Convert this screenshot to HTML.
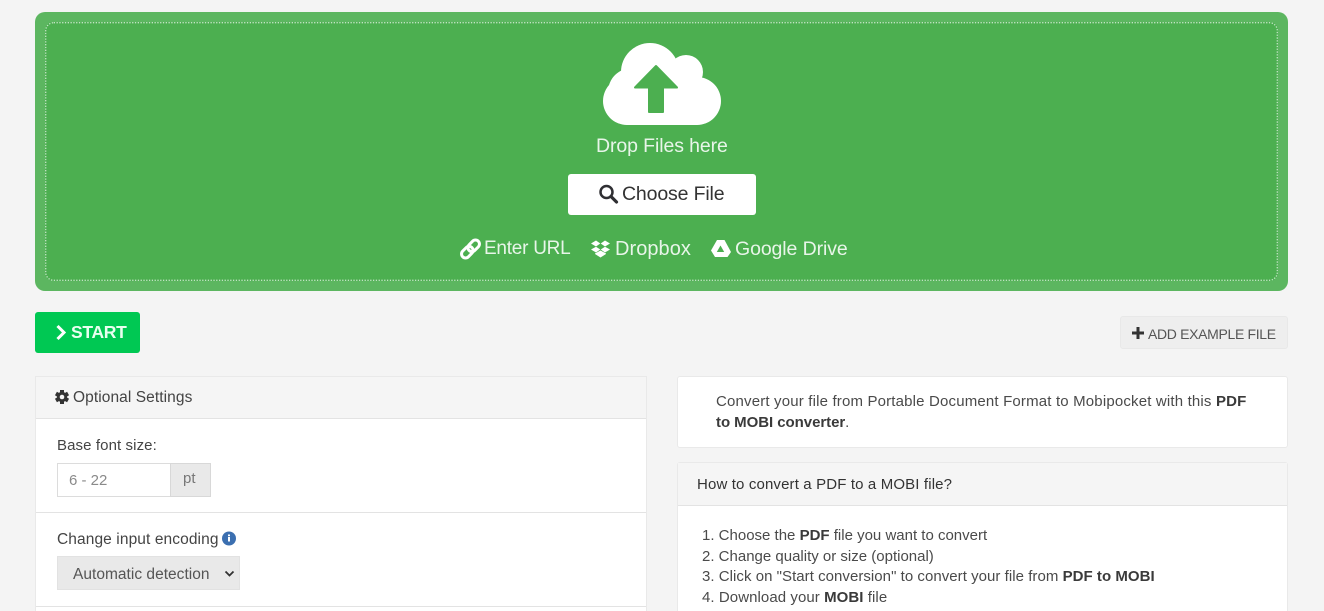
<!DOCTYPE html>
<html lang="en"><head><meta charset="utf-8"><title>PDF to MOBI converter</title>
<style>
html,body{margin:0;padding:0;background:#f4f4f4}
body{width:1324px;height:611px;overflow:hidden;position:relative;font-family:"Liberation Sans",sans-serif;color:#4a4a4a;font-size:15px}
#w{position:absolute;left:0;top:0;width:1324px;height:611px;overflow:hidden;filter:blur(.3px)}
.a{position:absolute;white-space:nowrap;line-height:20px}
.box{position:absolute;box-sizing:border-box;background:#fff;border:1px solid #e9e9e9}
.head{position:absolute;box-sizing:border-box;background:#f5f5f5;border-bottom:1px solid #e3e3e3}
b{font-weight:700;color:#3a3a3a}
svg{position:absolute;overflow:visible}
</style></head><body><div id="w">
<div style="position:absolute;left:35px;top:12px;width:1253px;height:279px;background:#5cb660;border-radius:10px"></div>
<div style="position:absolute;left:45px;top:22px;width:1233px;height:259px;background:#4caf50;border-radius:8px"></div>
<svg style="left:0;top:0" width="1324" height="611"><rect x="45.700" y="22.700" width="1231.600" height="257.600" rx="8" fill="none" stroke="#c3e3c5" stroke-width="1.300" stroke-dasharray="1.300 1.500"/></svg>
<div class="a" style="left:596px;top:136px;color:#e8f5e9;font-size:19.500px;letter-spacing:-.1px">Drop Files here</div>
<div style="position:absolute;left:568px;top:174px;width:188px;height:41px;background:#fff;border-radius:3px"></div>
<div class="a" style="left:622px;top:184px;color:#333;font-size:19.500px;letter-spacing:-.15px">Choose File</div>
<div class="a" style="left:484px;top:239px;color:#e8f5e9;font-size:19px;letter-spacing:-.25px">Enter URL</div>
<div class="a" style="left:615px;top:239px;color:#e8f5e9;font-size:20px;letter-spacing:.05px">Dropbox</div>
<div class="a" style="left:735px;top:239px;color:#e8f5e9;font-size:19.500px;letter-spacing:-.1px">Google Drive</div>
<div style="position:absolute;left:35px;top:312px;width:105px;height:41px;background:#00c853;border-radius:3px"></div>
<div class="a" style="left:71px;top:322px;color:#e9fff0;font-size:17.500px;font-weight:700;letter-spacing:-.3px">START</div>
<div style="position:absolute;left:1120px;top:316px;width:168px;height:33px;box-sizing:border-box;background:#eee;border:1px solid #e8e8e8;border-radius:3px"></div>
<div class="a" style="left:1148px;top:324px;font-size:14px;letter-spacing:-.33px;color:#555">ADD EXAMPLE FILE</div>
<div class="box" style="left:35px;top:376px;width:612px;height:260px"></div>
<div class="head" style="left:36px;top:377px;width:610px;height:42px"></div>
<div class="a" style="left:73px;top:388px;font-size:15.500px;letter-spacing:.08px;color:#444">Optional Settings</div>
<div class="a" style="left:57px;top:436px;font-size:15px;letter-spacing:.1px;color:#444">Base font size:</div>
<div style="position:absolute;left:57px;top:463px;width:114px;height:34px;box-sizing:border-box;background:#fff;border:1px solid #dcdcdc"></div>
<div class="a" style="left:69px;top:471px;font-size:15px;color:#8a8a8a">6 - 22</div>
<div style="position:absolute;left:170px;top:463px;width:41px;height:34px;box-sizing:border-box;background:#e9e9e9;border:1px solid #d8d8d8"></div>
<div class="a" style="left:183px;top:469px;font-size:15px;color:#777">pt</div>
<div style="position:absolute;left:36px;top:512px;width:610px;height:1px;background:#e3e3e3"></div>
<div class="a" style="left:57px;top:530px;font-size:15.500px;letter-spacing:.1px;color:#444">Change input encoding</div>
<div style="position:absolute;left:57px;top:556px;width:183px;height:34px;box-sizing:border-box;background:#e9e9e9;border:1px solid #e2e2e2"></div>
<div class="a" style="left:73px;top:565px;font-size:15.500px;letter-spacing:.02px;color:#555">Automatic detection</div>
<div style="position:absolute;left:36px;top:606px;width:610px;height:1px;background:#e3e3e3"></div>
<div class="box" style="left:677px;top:376px;width:611px;height:72px;border-radius:3px"></div>
<div class="a" style="left:716px;top:392px;font-size:15px;letter-spacing:.17px">Convert your file from Portable Document Format to Mobipocket with this <b>PDF</b></div>
<div class="a" style="left:716px;top:413px;font-size:15px;letter-spacing:-.05px"><b>to MOBI converter</b>.</div>
<div class="box" style="left:677px;top:462px;width:611px;height:170px;border-radius:3px"></div>
<div class="head" style="left:678px;top:463px;width:609px;height:43px"></div>
<div class="a" style="left:697px;top:475px;font-size:15px;letter-spacing:.14px;color:#333">How to convert a PDF to a MOBI file?</div>
<div class="a" style="left:702px;top:526px;font-size:15px">1. Choose the <b>PDF</b> file you want to convert</div>
<div class="a" style="left:702px;top:547px;font-size:15px">2. Change quality or size (optional)</div>
<div class="a" style="left:702px;top:567px;font-size:15px;letter-spacing:.04px">3. Click on "Start conversion" to convert your file from <b>PDF to MOBI</b></div>
<div class="a" style="left:702px;top:588px;font-size:15px;letter-spacing:.07px">4. Download your <b>MOBI</b> file</div>
<svg style="left:0;top:0" width="1324" height="611" viewBox="0 0 1324 611">
<g fill="#fff"><circle cx="627" cy="101" r="24"/><circle cx="632" cy="92" r="24"/><circle cx="650" cy="72" r="29"/><circle cx="686" cy="72" r="17"/><circle cx="697" cy="101" r="24"/><rect x="627" y="85" width="70" height="40"/></g>
<path d="M656 66L677 87.500H663V112H649V87.500H635Z" fill="#4caf50" stroke="#4caf50" stroke-width="2" stroke-linejoin="round"/>
<g fill="none" stroke="#fff" stroke-width="3" transform="rotate(-45 470.500 249)"><rect x="459.500" y="245" width="13" height="8" rx="4"/><rect x="468.500" y="245" width="13" height="8" rx="4"/></g>
<path d="M596 240.500L600.300 243.500L596 246.500L591 243.500ZM605 240.500L610 243.500L605 246.500L600.700 243.500ZM591 249.500L596 246.800L600.300 249.500L596 252.500ZM610 249.500L605 246.800L600.700 249.500L605 252.500ZM595 253.500L600.500 250.500L606 253.500V254L600.500 257.500L595 254Z" fill="#fff"/>
<path fill-rule="evenodd" d="M717 240H724.500L731 252L727.500 257H715L711 250.500ZM720.500 245.500L716.800 252H724.200Z" fill="#fff"/>
<circle cx="606.500" cy="192" r="6" fill="none" stroke="#2f2f33" stroke-width="2.500"/><path d="M611 196.500L616.500 202" stroke="#2f2f33" stroke-width="3.200" stroke-linecap="round"/>
<path d="M57.500 326L64 332.500L57.500 339" fill="none" stroke="#fff" stroke-width="3"/>
<path d="M1132 333H1144M1138 327V339" stroke="#333" stroke-width="3"/>
<g fill="#333" transform="translate(62 397)"><rect x="-2" y="-7" width="4" height="14"/><rect x="-2" y="-7" width="4" height="14" transform="rotate(60)"/><rect x="-2" y="-7" width="4" height="14" transform="rotate(120)"/><circle r="5.200"/></g><circle cx="62" cy="397" r="2.300" fill="#f5f5f5"/>
<circle cx="229" cy="538.500" r="7" fill="#3b6fb0"/><rect x="228" y="537" width="2" height="4.500" fill="#fff"/><rect x="228" y="534.500" width="2" height="1.700" fill="#fff"/>
<path d="M225.500 571.500L229.500 575.500L233.500 571.500" fill="none" stroke="#333" stroke-width="1.800"/>
</svg>
</div></body></html>
